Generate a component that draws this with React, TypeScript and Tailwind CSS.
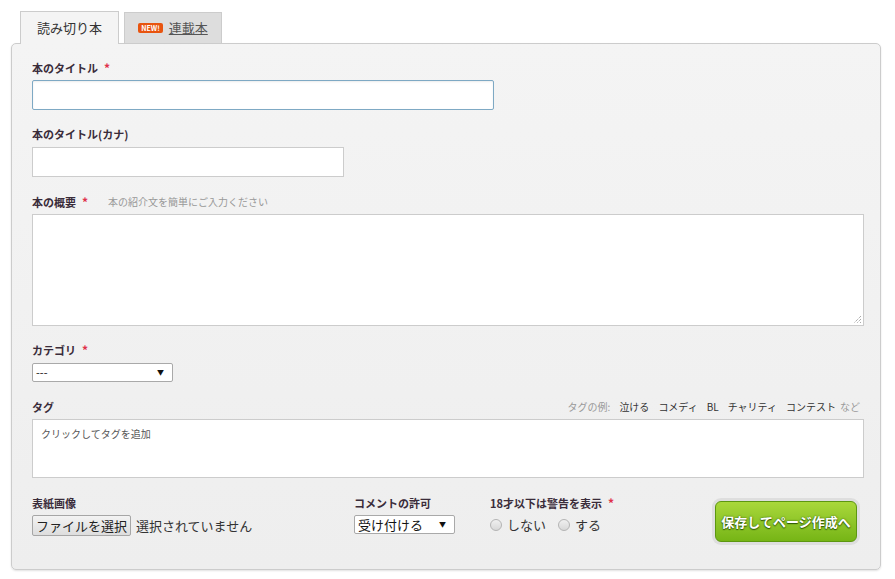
const jp = "font-['Noto_Sans_CJK_JP','Liberation_Sans',sans-serif]";

function Required() {
  return <span className="ml-[6px] text-[12px] font-bold leading-[14px] text-[#e0304a]">*</span>;
}

function Label({ children, required }: { children: React.ReactNode; required?: boolean }) {
  return (
    <div className="flex h-[14px] items-center text-[11px] font-bold leading-[14px] text-[#3a2c3a]">
      {children}
      {required && <Required />}
    </div>
  );
}

function FakeSelect({ value, width, big }: { value: string; width: string; big?: boolean }) {
  return (
    <div
      className={`flex h-[19px] items-center justify-between rounded-[2px] border border-[#a9a9a9] bg-white pl-[3px] pr-[8px] ${width}`}
    >
      <span className={big ? 'text-[13px] leading-none text-[#111]' : 'text-[11px] leading-none text-[#111]'}>
        {value}
      </span>
      <span className="text-[7px] leading-none text-[#111]">▼</span>
    </div>
  );
}

function Radio({ label }: { label: string }) {
  return (
    <label className="flex items-center gap-[5px] text-[13px] leading-[16px] text-[#333]">
      <span className="h-[12px] w-[12px] rounded-full border border-[#b4b4b4] bg-gradient-to-b from-[#f0f0f0] to-[#d8d8d8]" />
      {label}
    </label>
  );
}

const TAG_EXAMPLES = ['泣ける', 'コメディ', 'BL', 'チャリティ', 'コンテスト'];

export default function App() {
  return (
    <div className={`h-[579px] w-[895px] bg-white ${jp}`}>
      <div className="pl-[11px] pt-[11px]">
        {/* tabs */}
        <div className="flex h-[32px] items-end gap-[5px] pl-[9px]">
          <div className="relative z-10 -mb-px flex h-[33px] w-[99px] items-center justify-center border border-b-0 border-[#cccccc] bg-[#f4f4f4] text-[13px] text-[#333]">
            読み切り本
          </div>
          <div className="flex h-[31px] w-[98px] items-center justify-center gap-[6px] border border-b-0 border-[#cccccc] bg-[#dddddd] text-[13px]">
            <span className="rounded-[2px] bg-[#e8540f] px-[3px] py-[1px] text-[7px] font-bold leading-[8px] text-white">
              NEW!
            </span>
            <span className="text-[#555] underline">連載本</span>
          </div>
        </div>

        {/* panel */}
        <div className="h-[527px] w-[870px] rounded-[5px] border border-[#cccccc] bg-gradient-to-b from-[#f4f4f4] to-[#eeeeee] px-5 pt-[17px] shadow-[0_1px_2px_rgba(0,0,0,0.12)]">
          <Label required>本のタイトル</Label>
          <div className="mt-[5px] h-[30px] w-[462px] rounded-[2px] border border-[#7ea9c4] bg-white shadow-[inset_0_1px_2px_rgba(0,0,0,0.08)]" />

          <div className="mt-[17px]">
            <Label>本のタイトル(カナ)</Label>
          </div>
          <div className="mt-[6px] h-[30px] w-[312px] border border-[#cccccc] bg-white" />

          <div className="mt-[18px] flex h-[14px] items-center">
            <Label required>本の概要</Label>
            <span className="ml-[20px] text-[10px] leading-[14px] text-[#999]">本の紹介文を簡単にご入力ください</span>
          </div>
          <div className="relative mt-[5px] h-[112px] w-[832px] border border-[#cccccc] bg-white">
            <svg className="absolute bottom-[1px] right-[1px]" width="9" height="9" viewBox="0 0 9 9">
              <path d="M8 1 L1 8 M8 4 L4 8 M8 7 L7 8" stroke="#888" strokeWidth="1" strokeDasharray="1 1" />
            </svg>
          </div>

          <div className="mt-[17px]">
            <Label required>カテゴリ</Label>
          </div>
          <div className="mt-[6px]">
            <FakeSelect value="---" width="w-[141px]" />
          </div>

          <div className="mt-[18px] flex h-[14px] w-[832px] items-center justify-between">
            <Label>タグ</Label>
            <div className="flex items-center gap-[9px] pr-[4px] text-[10px] leading-[14px] text-[#333]">
              <span className="text-[#999]">タグの例:</span>
              {TAG_EXAMPLES.map((t) => (
                <span key={t}>{t}</span>
              ))}
              <span className="-ml-[5px] text-[#999]">など</span>
            </div>
          </div>
          <div className="mt-[5px] h-[59px] w-[832px] border border-[#cccccc] bg-white px-[8px] pt-[7px] text-[10px] leading-[14px] text-[#555]">
            クリックしてタグを追加
          </div>

          {/* bottom row */}
          <div className="mt-[18px] flex w-[832px] items-start">
            <div className="w-[322px]">
              <Label>表紙画像</Label>
              <div className="mt-[5px] flex items-center gap-[5px]">
                <button
                  type="button"
                  className="h-[21px] w-[99px] rounded-[2px] border border-[#a6a6a6] bg-gradient-to-b from-[#f3f3f3] to-[#dddddd] text-[13px] leading-none text-[#222]"
                >
                  ファイルを選択
                </button>
                <span className="text-[13px] leading-[16px] text-[#333]">選択されていません</span>
              </div>
            </div>
            <div className="w-[136px]">
              <Label>コメントの許可</Label>
              <div className="mt-[5px]">
                <FakeSelect value="受け付ける" width="w-[101px]" big />
              </div>
            </div>
            <div>
              <Label required>18才以下は警告を表示</Label>
              <div className="mt-[7px] flex items-center gap-[12px]">
                <Radio label="しない" />
                <Radio label="する" />
              </div>
            </div>
            <div className="ml-auto mr-[4px] mt-[2px] rounded-[9px] bg-[#dedede] p-[3px]">
              <button
                type="button"
                className="flex h-[41px] w-[142px] items-center justify-center rounded-[6px] border border-[#5c9710] bg-gradient-to-b from-[#a9d83a] to-[#76b515] text-[13px] font-bold leading-none text-white [text-shadow:0_0_2px_#2f5a05,0_1px_1px_#2f5a05]"
              >
                保存してページ作成へ
              </button>
            </div>
          </div>
        </div>
      </div>
    </div>
  );
}
